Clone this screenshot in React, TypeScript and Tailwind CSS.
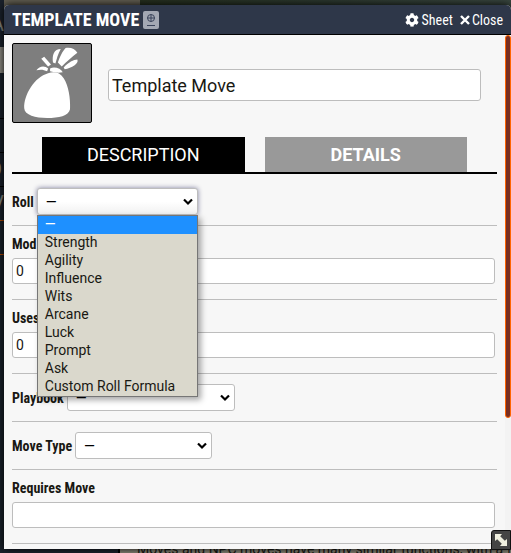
import React from "react";
import { FaCog, FaTimes } from "react-icons/fa";

const CONDENSED = "font-['Roboto_Condensed','Liberation_Sans_Narrow',Roboto,sans-serif]";

const ROLL_OPTIONS = ["—", "Strength", "Agility", "Influence", "Wits", "Arcane", "Luck", "Prompt", "Ask", "Custom Roll Formula"];

function Chevron() {
  return (
    <svg viewBox="0 0 10 7" className="pointer-events-none absolute top-1/2 right-[5px] h-[7px] w-[10px] -translate-y-1/2" fill="none" stroke="#000" strokeWidth="2.2">
      <path d="M1 1l4 4 4-4" />
    </svg>
  );
}

function SelectRow({ id, label, width, options, open, first }: { id: string; label: string; width: string; options: string[]; open?: boolean; first?: boolean }) {
  return (
    <div className={`flex items-center gap-[3px] border-b border-[#bdbdbd] pb-2.5 ${first ? "pt-3.5" : "pt-2.5"}`}>
      <label htmlFor={id} className={`text-sm leading-5 font-bold ${CONDENSED}`}>{label}</label>
      <div className={`relative ${width}`}>
        <select id={id} className={`block h-[27px] w-full appearance-none rounded-[3px] border border-[#bdbdbd] bg-white px-2 text-sm text-black outline-none ${open ? "bg-linear-to-b from-white from-50% to-[#f1f1f1] shadow-[0_0_5px_#8080a0]" : ""}`}>
          {options.map((o) => <option key={o}>{o}</option>)}
        </select>
        <Chevron />
        {open && (
          <ul role="listbox" aria-label={label} className="absolute top-full left-0 z-10 w-full border border-[#767676] bg-[#dad8cc] text-sm leading-4 text-[#191813] shadow-[3px_3px_6px_rgba(0,0,0,0.35)]">
            {options.map((o, i) => (
              <li key={o} role="option" aria-selected={i === 0} className={`h-[18px] px-[7px] ${i === 0 ? "bg-[#1e90ff] text-white" : ""}`}>{o}</li>
            ))}
          </ul>
        )}
      </div>
    </div>
  );
}

function InputRow({ id, label, value }: { id: string; label: string; value: string }) {
  return (
    <div className="flex flex-col gap-1 border-b border-[#bdbdbd] pt-2 pr-0.5 pb-[15px]">
      <label htmlFor={id} className={`text-sm leading-5 font-bold ${CONDENSED}`}>{label}</label>
      <input id={id} defaultValue={value} className="h-[26px] w-full rounded-[3px] border border-[#bdbdbd] bg-white px-[3px] text-sm outline-none" />
    </div>
  );
}

function BagIcon() {
  return (
    <svg viewBox="0 0 80 80" className="size-full" fill="#fff">
      <path d="M36 30C42 28 48 29 52 35C57 43 59 55 58.500 67C57 74 47 76 35 76C23 76 12 73 11.500 66C11 52 22 34 36 30Z" />
      <path d="M24 27C27 22 33 22 36 25L35 28C31 26 28 26 24 27Z" />
      <path d="M38 25C43 23 49 25 51 29C46 30 42 29 38 28Z" />
      <path d="M29 15L32 13L39 21L36 23Z" />
      <path d="M41 19C40 11 42 5 49 5C46 10 45 15 43.500 20Z" />
      <path d="M46 19C48 13 51 7 54 4C59 3 64 5 66 9C61 13 55 18 50 23Z" />
      <path d="M52 24C57 19 62 16 66 16C68 20 60 25 53 26Z" />
    </svg>
  );
}

function Backdrop() {
  return (
    <div className="absolute inset-0 overflow-hidden">
      <div className="absolute inset-x-0 top-0 flex h-3">
        <div className="w-[140px] bg-[#635f52]" />
        <div className="flex-1 bg-linear-to-r from-[#26301f] via-[#2c382f] to-[#39463f]" />
      </div>
      <div className="absolute inset-y-0 left-0 w-1 bg-[#1a212b] text-xl leading-7 text-[#85857c]">
        <div className="absolute top-[10px] right-0">A</div>
        <div className="absolute top-[47px] h-[26px] w-1 bg-[#8b8981]" />
        <div className="absolute top-[118px] h-px w-1 bg-black" />
        <div className="absolute top-[152px] h-px w-1 bg-black" />
        <div className="absolute top-[155px] right-[2px]">O</div>
        <div className="absolute top-[186px] h-px w-1 bg-black" />
        <div className="absolute top-[189px] right-0">V</div>
        <div className="absolute top-[220px] h-px w-1 bg-[#b34700]" />
        <div className="absolute top-[254px] h-px w-1 bg-[#b34700]" />
      </div>
      <div className="absolute right-0 bottom-0 left-[118px] h-3 overflow-hidden border-l-2 border-black bg-[#8b8779]">
        <p className="pl-[17px] text-sm leading-4 whitespace-nowrap text-[#191813]">Moves and NPC moves have many similar functions, with a few</p>
      </div>
    </div>
  );
}

export default function App() {
  return (
    <div className="relative flex h-screen min-h-[553px] flex-col overflow-hidden bg-[#1c232e] pt-[5px] pb-1 pl-1 font-[Roboto,sans-serif] text-[#191813]">
      <Backdrop />
      <section className="relative flex min-h-0 flex-1 flex-col rounded-t-[5px] bg-[#f7f7f7] shadow-[0_0_8px_#000]">
        <header className={`flex h-[30px] shrink-0 items-center rounded-t-[5px] border-b border-black bg-[#2e3749] px-2 text-white ${CONDENSED}`}>
          <h1 className="text-lg leading-7 font-bold">TEMPLATE MOVE</h1>
          <button aria-label="Copy document ID" className="ml-1 flex h-[18px] w-4 items-center justify-center rounded-xs bg-[#a3a8b3]">
            <svg viewBox="0 0 10 14" className="h-3.5 w-2.5" fill="none" stroke="#39435a">
              <circle cx="5" cy="5" r="3.5" />
              <path d="M1.5 5h7M5 1.500v7" />
              <path d="M1 12.500h8" />
            </svg>
          </button>
          <div className="flex-1" />
          <div className="flex gap-[7px] text-sm leading-5">
            <button className="flex items-center gap-[3px]"><FaCog size={14} />Sheet</button>
            <button className="flex items-center gap-0.5">
              <svg viewBox="0 0 10 10" className="size-2.5" stroke="#fff" strokeWidth="2.4"><path d="M1 1l8 8M9 1l-8 8" /></svg>
              Close
            </button>
          </div>
        </header>

        <div className="flex min-h-0 flex-1">
          <form className="min-w-0 flex-1 px-2 pt-2">
            <div className="flex items-center gap-4 pr-4">
              <div className="size-20 shrink-0 rounded-xs border border-black bg-[#7e7e7e]"><BagIcon /></div>
              <input aria-label="Name" defaultValue="Template Move" className="mt-1 h-8 min-w-0 flex-1 rounded-[3px] border border-[#bdbdbd] bg-white px-[3px] text-lg outline-none" />
            </div>
            <nav className="mt-3.5 flex gap-5 border-b-2 border-black px-[30px] text-lg leading-[35px] text-white">
              <button type="button" className="h-[35px] flex-1 bg-black">DESCRIPTION</button>
              <button type="button" className="h-[35px] flex-1 bg-[#999] font-bold">DETAILS</button>
            </nav>
            <SelectRow first open id="roll" label="Roll" width="w-[161px]" options={ROLL_OPTIONS} />
            <InputRow id="modifier" label="Mod" value="0" />
            <InputRow id="uses" label="Uses" value="0" />
            <SelectRow id="playbook" label="Playbook" width="w-[168px]" options={["—"]} />
            <SelectRow id="type" label="Move Type" width="w-[137px]" options={["—"]} />
            <InputRow id="requires" label="Requires Move" value="" />
          </form>
          <div className="w-1.5 shrink-0 bg-[#f3f3f3]">
            <div className="h-[383px] max-h-full rounded-[3px] border border-[#ff6400] bg-[#782e22]" />
          </div>
        </div>

        <button aria-label="Resize" className="absolute right-0 -bottom-px flex size-5 items-center justify-center rounded-tl-[3px] border border-[#111] bg-[#444]">
          <svg viewBox="0 0 12 12" className="size-3 shrink-0" fill="#f0f0e0">
            <path d="M0 0h7L5.200 2.200 9.800 6.800 12 5v7H5l1.800-2.200L2.200 5.200 0 7z" />
          </svg>
        </button>
      </section>
    </div>
  );
}
